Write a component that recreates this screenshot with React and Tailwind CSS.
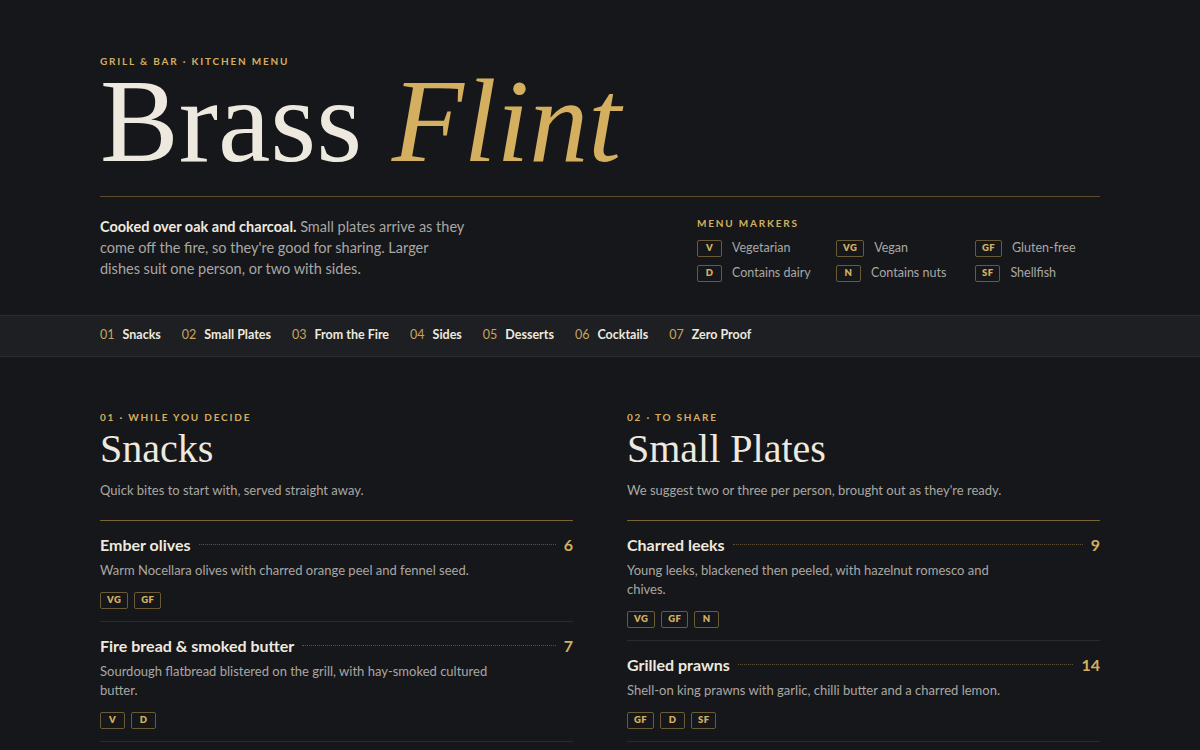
const markers = [
  { code: 'V', label: 'Vegetarian' },
  { code: 'VG', label: 'Vegan' },
  { code: 'GF', label: 'Gluten-free' },
  { code: 'D', label: 'Contains dairy' },
  { code: 'N', label: 'Contains nuts' },
  { code: 'SF', label: 'Shellfish' },
]

const nav = ['Snacks', 'Small Plates', 'From the Fire', 'Sides', 'Desserts', 'Cocktails', 'Zero Proof']

const sections = [
  {
    eyebrow: '01 · While you decide',
    title: 'Snacks',
    intro: 'Quick bites to start with, served straight away.',
    items: [
      { name: 'Ember olives', price: '6', desc: 'Warm Nocellara olives with charred orange peel and fennel seed.', tags: ['VG', 'GF'] },
      { name: 'Fire bread & smoked butter', price: '7', desc: 'Sourdough flatbread blistered on the grill, with hay-smoked cultured butter.', tags: ['V', 'D'] },
      { name: 'Crispy pig skin', price: '5', desc: 'Puffed crackling with smoked salt and burnt apple ketchup.', tags: ['GF'] },
    ],
  },
  {
    eyebrow: '02 · To share',
    title: 'Small Plates',
    intro: "We suggest two or three per person, brought out as they're ready.",
    items: [
      { name: 'Charred leeks', price: '9', desc: 'Young leeks, blackened then peeled, with hazelnut romesco and chives.', tags: ['VG', 'GF', 'N'] },
      { name: 'Grilled prawns', price: '14', desc: 'Shell-on king prawns with garlic, chilli butter and a charred lemon.', tags: ['GF', 'D', 'SF'] },
      { name: 'Beef fat potatoes', price: '8', desc: 'Crushed potatoes roasted in dripping, with rosemary salt.', tags: ['GF'] },
    ],
  },
]

const sans = "font-['Lato','Noto_Sans',sans-serif]"
const serif = "font-['Liberation_Serif','DejaVu_Serif',serif]"

function Tag({ code }) {
  return (
    <span className="inline-flex h-[17px] min-w-[25px] items-center justify-center rounded-[2px] border border-[#6b5a36] px-[6px] text-[9.5px] font-extrabold tracking-[0.04em] text-[#d4af5f]">
      {code}
    </span>
  )
}

function Item({ item }) {
  return (
    <div className="border-b border-[#2a2b2f] pt-[12px] pb-[12px]">
      <div className="flex items-center gap-[8px]">
        <span className="text-[16px] font-bold text-[#eee9df]">{item.name}</span>
        <span className="h-0 flex-1 border-t border-dotted border-[#5e5138]" />
        <span className="text-[16px] font-bold text-[#d4af5f]">{item.price}</span>
      </div>
      <p className="mt-[4px] max-w-[400px] text-[13px] leading-[19px] text-[#a9a7a2]">{item.desc}</p>
      <div className="mt-[12px] flex gap-[6px]">
        {item.tags.map((t) => <Tag key={t} code={t} />)}
      </div>
    </div>
  )
}

export default function App() {
  return (
    <div className={`min-h-screen bg-[#16171b] ${sans} text-[#a9a7a2]`}>
      {/* ── Header ───────────────────────────── */}
      <header className="mx-auto w-[1000px] pt-[54px]">
        <div className="text-[10px] font-bold uppercase leading-[14px] tracking-[0.18em] text-[#d4af5f]">
          Grill &amp; Bar · Kitchen Menu
        </div>
        <h1 className={`${serif} text-[118px] leading-[108px] text-[#eee9df]`}>
          Brass <em className="text-[#d4af5f]">Flint</em>
        </h1>
        <div className="mt-[20px] border-t border-[#5e4e30]" />

        <div className="flex justify-between pt-[19px]">
          <p className="w-[368px] text-[14.5px] leading-[21px] text-[#a9a7a2]">
            <strong className="font-bold text-[#eee9df]">Cooked over oak and charcoal.</strong> Small plates arrive as they
            come off the fire, so they're good for sharing. Larger dishes suit one person, or two with sides.
          </p>
          <div className="w-[403px]">
            <div className="text-[10px] font-bold uppercase leading-[14px] tracking-[0.18em] text-[#d4af5f]">Menu markers</div>
            <div className="mt-[9px] grid grid-cols-[139px_139px_125px] gap-y-[6px]">
              {markers.map((m) => (
                <div key={m.code} className="flex items-center gap-[10px]">
                  <Tag code={m.code} />
                  <span className="text-[12.5px] text-[#a9a7a2]">{m.label}</span>
                </div>
              ))}
            </div>
          </div>
        </div>
      </header>

      {/* ── Nav ──────────────────────────────── */}
      <nav className="mt-[32px] border-y border-[#2a2c30] bg-[#1d1f23]">
        <div className="mx-auto flex h-[40px] w-[1000px] items-center gap-[21px]">
          {nav.map((n, i) => (
            <div key={n} className="flex items-center gap-[8px] text-[12.5px]">
              <span className="text-[#c9a45c]">{String(i + 1).padStart(2, '0')}</span>
              <span className="font-bold text-[#eee9df]">{n}</span>
            </div>
          ))}
        </div>
      </nav>

      {/* ── Sections ─────────────────────────── */}
      <main className="mx-auto grid w-[1000px] grid-cols-2 gap-[54px] pt-[53px]">
        {sections.map((s) => (
          <section key={s.title}>
            <div className="text-[10px] font-bold uppercase leading-[14px] tracking-[0.18em] text-[#d4af5f]">{s.eyebrow}</div>
            <h2 className={`${serif} mt-[3px] text-[40px] leading-[44px] text-[#eee9df]`}>{s.title}</h2>
            <p className="mt-[10px] text-[13px] leading-[18px] text-[#a9a7a2]">{s.intro}</p>
            <div className="mt-[21px] border-t border-[#7a6438]">
              {s.items.map((it) => <Item key={it.name} item={it} />)}
            </div>
          </section>
        ))}
      </main>
    </div>
  )
}
